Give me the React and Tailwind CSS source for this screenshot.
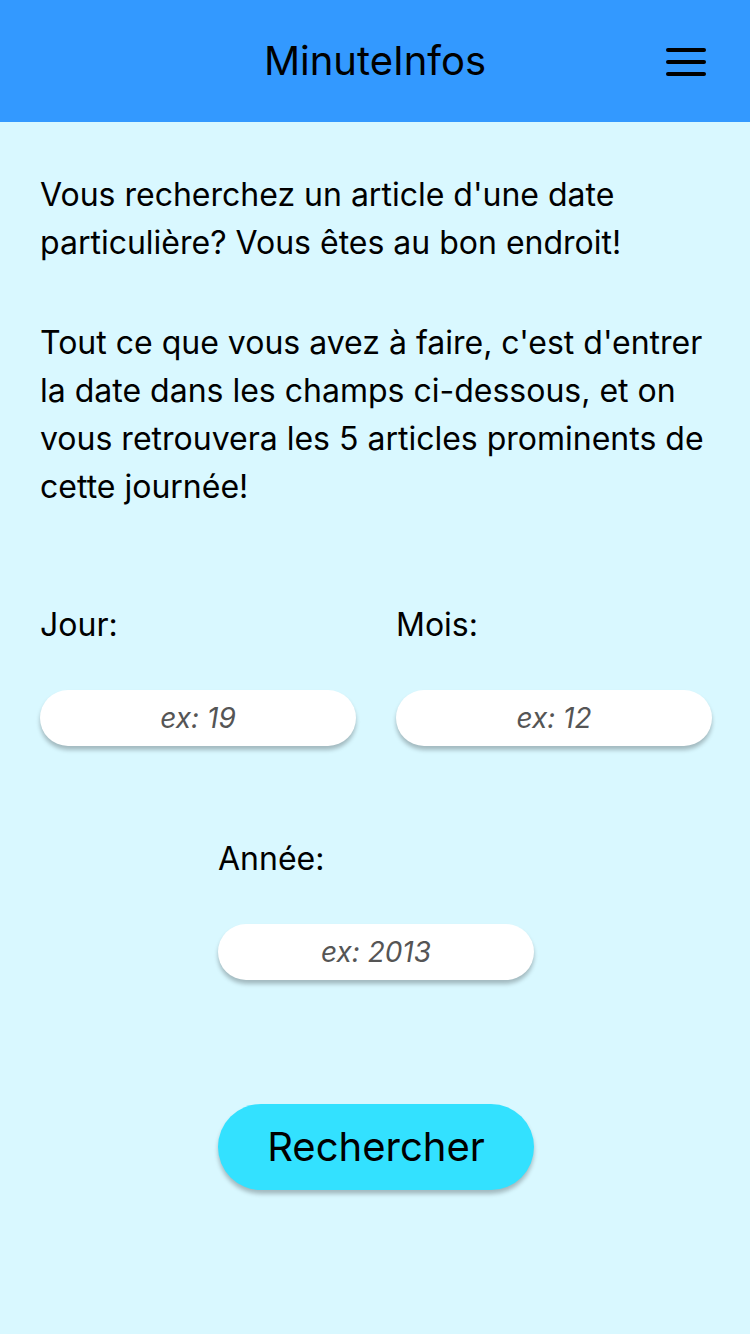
import React from 'react';

const inter = { fontFamily: 'Inter, "Noto Sans", sans-serif' };

const DateField = ({ label, placeholder }) => (
  <div className="flex w-[316px] shrink-0 flex-col">
    <label className="text-[32px] leading-[48px] text-black">{label}</label>
    <input
      type="text"
      placeholder={placeholder}
      className="mt-[41px] h-[56px] w-full rounded-full bg-white text-center text-[28px] italic text-[#555] shadow-[0_4px_4px_rgba(0,0,0,0.25)] outline-none placeholder:text-[#555]"
    />
  </div>
);

const App = () => {
  return (
    <div className="min-h-[1334px] w-[750px] bg-[#d9f8ff]" style={inter}>
      {/* Header */}
      <header className="relative flex h-[122px] items-center justify-center bg-[#3399ff]">
        <h1 className="text-[40px] font-normal text-black">MinuteInfos</h1>
        <button className="absolute right-[44px] top-[48px] flex w-[40px] flex-col gap-[8.5px]">
          <span className="block h-[3.5px] w-full rounded-full bg-black"></span>
          <span className="block h-[3.5px] w-full rounded-full bg-black"></span>
          <span className="block h-[3.5px] w-full rounded-full bg-black"></span>
        </button>
      </header>

      <main className="pl-[40px] pr-[38px] pt-[49px]">
        <p className="text-[32px] leading-[48px] text-black">
          Vous recherchez un article d'une date particulière? Vous êtes au bon endroit!
        </p>
        <p className="mt-[52px] text-[32px] leading-[48px] text-black">
          Tout ce que vous avez à faire, c'est d'entrer la date dans les champs ci-dessous, et on vous retrouvera les 5 articles prominents de cette journée!
        </p>

        <div className="mt-[90px] flex gap-[40px]">
          <DateField label="Jour:" placeholder="ex: 19" />
          <DateField label="Mois:" placeholder="ex: 12" />
        </div>

        <div className="mt-[89px] flex justify-center">
          <DateField label="Année:" placeholder="ex: 2013" />
        </div>

        <div className="mt-[124px] flex justify-center">
          <button className="h-[86px] w-[316px] rounded-full bg-[#33e1ff] text-[40px] text-black shadow-[0_4px_4px_rgba(0,0,0,0.25)]">
            Rechercher
          </button>
        </div>
      </main>
    </div>
  );
};

export default App;
